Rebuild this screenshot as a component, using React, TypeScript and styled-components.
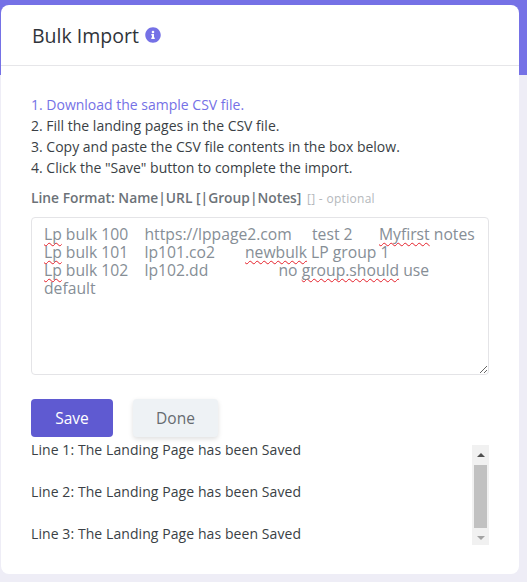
import { useEffect, useRef } from 'react'
import styled, { createGlobalStyle } from 'styled-components'
import { FaInfoCircle } from 'react-icons/fa'

const PURPLE = '#7571e6'
const FONT = `"Open Sans", "Noto Sans", sans-serif`

const GlobalStyle = createGlobalStyle`
  html, body {
    margin: 0;
    padding: 0;
  }
  body {
    font-family: ${FONT};
    color: #3a3f45;
  }
`

const Page = styled.div`
  width: 527px;
  height: 582px;
  box-sizing: border-box;
  padding: 5px 8px 8px 1px;
  overflow: hidden;
  background: linear-gradient(${PURPLE} 75px, #eeedf6 75px);
`

const Card = styled.div`
  height: 100%;
  background: #fff;
  border-radius: 8px;
  display: flex;
  flex-direction: column;
`

const Header = styled.div`
  height: 61px;
  flex: none;
  box-sizing: border-box;
  border-bottom: 1px solid #e6e6e9;
  padding: 0 31px;
  display: flex;
  align-items: center;
  gap: 6px;
`

const Title = styled.h2`
  margin: 0;
  font-size: 19.5px;
  font-weight: 400;
  color: #30343a;
`

const InfoIcon = styled(FaInfoCircle)`
  width: 16px;
  height: 16px;
  color: ${PURPLE};
`

const Body = styled.div`
  padding: 28px 30px 0;
  display: flex;
  flex-direction: column;
`

const Steps = styled.ol`
  margin: 0;
  padding: 0;
  list-style: none;
  font-size: 14px;
  line-height: 21px;
`

const StepLink = styled.a`
  color: ${PURPLE};
  text-decoration: none;
`

const FormatLine = styled.div`
  margin-top: 10px;
  font-size: 13.8px;
  line-height: 20px;
  font-weight: 600;
  color: #6c7278;
`

const Optional = styled.span`
  margin-left: 2px;
  font-size: 12px;
  font-weight: 400;
  letter-spacing: 0.3px;
  color: #b4b8bc;
`

const CsvBox = styled.div`
  margin-top: 8px;
  width: 458px;
  height: 158px;
  box-sizing: border-box;
  border: 1px solid #e4e4e7;
  border-radius: 4px;
  padding: 7px 12px;
  font-size: 15.7px;
  line-height: 18px;
  color: #868e96;
  white-space: pre-wrap;
  tab-size: 33.5px;
  overflow: auto;
  resize: vertical;
`

const Misspelled = styled.span`
  text-decoration: underline wavy #e5202a 1px;
  text-decoration-skip-ink: none;
  text-underline-offset: 2px;
`

const Buttons = styled.div`
  margin-top: 24px;
  display: flex;
  gap: 20px;
`

const Button = styled.button<{ $primary?: boolean }>`
  height: 38px;
  width: ${p => (p.$primary ? '82px' : '85px')};
  border: 0;
  border-radius: 4px;
  font-family: ${FONT};
  font-size: 15.5px;
  color: ${p => (p.$primary ? '#fff' : '#666b70')};
  background: ${p => (p.$primary ? '#5f5ad1' : '#eef2f5')};
  box-shadow: ${p => (p.$primary ? 'none' : '0 2px 5px rgba(0, 0, 0, 0.13)')};
`

const LogRow = styled.div`
  margin-top: 8px;
  width: 458px;
  height: 100px;
  display: flex;
`

const Log = styled.div`
  flex: 1;
  overflow-y: scroll;
  scrollbar-width: none;
  font-size: 14px;
  letter-spacing: 0.08px;
  line-height: 24px;
`

const LogLine = styled.p`
  margin: 0 0 18px;
`

const ScrollTrack = styled.div`
  width: 17px;
  flex: none;
  box-sizing: border-box;
  padding: 0 2px;
  background: #f1f1f1;
  display: flex;
  flex-direction: column;
  align-items: center;
`

const ScrollArrow = styled.div<{ $down?: boolean }>`
  height: 20px;
  width: 100%;
  flex: none;
  display: flex;
  align-items: center;
  justify-content: center;

  &::before {
    content: '';
    border-left: 4px solid transparent;
    border-right: 4px solid transparent;
    ${p => (p.$down ? 'border-top: 4px solid #a3a3a3;' : 'border-bottom: 4px solid #505050;')}
  }
`

const ScrollThumb = styled.div`
  width: 100%;
  height: 63px;
  flex: none;
  background: #c1c1c1;
`

const logLines = [1, 2, 3]

export default function App() {
  const logRef = useRef<HTMLDivElement>(null)

  useEffect(() => {
    if (logRef.current) logRef.current.scrollTop = 7
  }, [])

  return (
    <Page>
      <GlobalStyle />
      <Card>
        <Header>
          <Title>Bulk Import</Title>
          <InfoIcon />
        </Header>
        <Body>
          <Steps>
            <li><StepLink href="#">1. Download the sample CSV file.</StepLink></li>
            <li>2. Fill the landing pages in the CSV file.</li>
            <li>3. Copy and paste the CSV file contents in the box below.</li>
            <li>4. Click the "Save" button to complete the import.</li>
          </Steps>
          <FormatLine>
            Line Format: Name|URL [|Group|Notes] <Optional>[] - optional</Optional>
          </FormatLine>
          <CsvBox>
            <Misspelled>Lp</Misspelled>{' bulk 100\thttps://lppage2.com\ttest 2\t'}<Misspelled>Myfirst</Misspelled>{' notes\n'}
            <Misspelled>Lp</Misspelled>{' bulk 101\tlp101.co2\t'}<Misspelled>newbulk</Misspelled>{' LP group 1\n'}
            <Misspelled>Lp</Misspelled>{' bulk 102\tlp102.dd\t\t\tno '}<Misspelled>group.should</Misspelled>{' use default'}
          </CsvBox>
          <Buttons>
            <Button $primary>Save</Button>
            <Button>Done</Button>
          </Buttons>
          <LogRow>
            <Log ref={logRef}>
              {logLines.map(n => (
                <LogLine key={n}>Line {n}: The Landing Page has been Saved</LogLine>
              ))}
            </Log>
            <ScrollTrack aria-hidden>
              <ScrollArrow />
              <ScrollThumb />
              <ScrollArrow $down />
            </ScrollTrack>
          </LogRow>
        </Body>
      </Card>
    </Page>
  )
}
